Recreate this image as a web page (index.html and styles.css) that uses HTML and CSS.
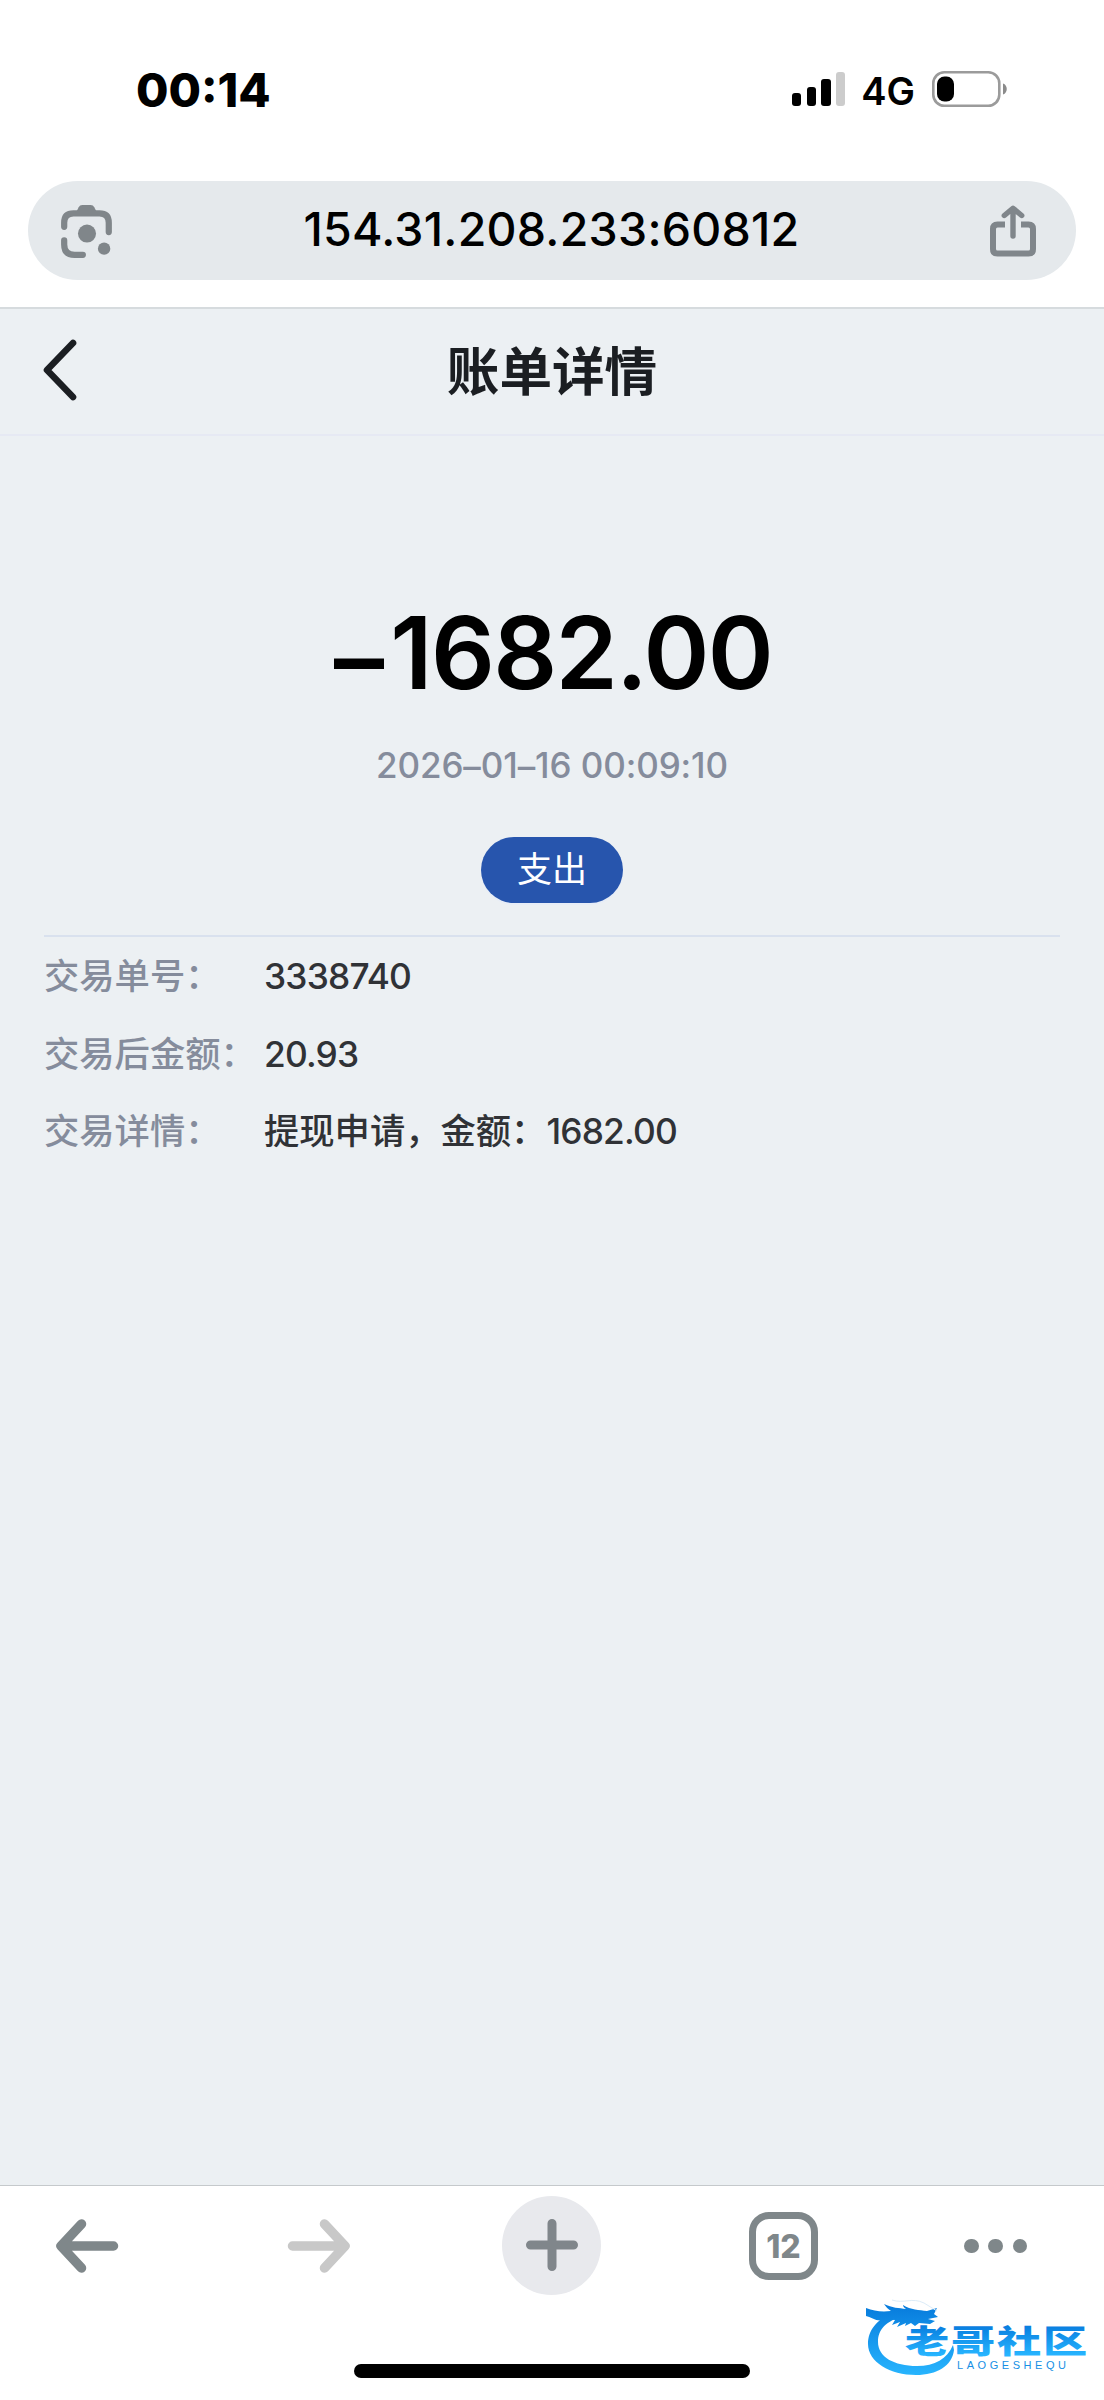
FILE: index.html
```html
<!DOCTYPE html>
<html lang="zh-CN">
<head>
  <meta charset="utf-8">
  <title>账单详情</title>
  <link rel="stylesheet" href="styles.css">
</head>
<body>
  <div class="phone">
    <div class="status-bar">
      <div class="time">00:14</div>
      <div class="status-icons">
        <div class="signal">
          <span class="bar bar-1"></span>
          <span class="bar bar-2"></span>
          <span class="bar bar-3"></span>
          <span class="bar bar-4"></span>
        </div>
        <div class="network">4G</div>
        <svg class="battery" width="76" height="36" viewBox="0 0 76 36">
          <rect x="1.3" y="1.3" width="66" height="33.4" rx="11" fill="none" stroke="#9b9b9b" stroke-width="2.6"/>
          <rect x="5" y="5.5" width="17" height="25" rx="7.5" fill="#000"/>
          <path d="M71 12.5c5 1.5 5 9.5 0 11z" fill="#8b8b8b"/>
        </svg>
      </div>
    </div>

    <div class="address-bar">
      <svg class="lens" width="54" height="56" viewBox="0 0 52 54">
        <path d="M4 23v-4q0-9 9-9h25q9 0 9 9v9M4 36v4q0 10 10 10h8" fill="none" stroke="#80868a" stroke-width="6" stroke-linecap="round"/>
        <path d="M15 10l3-6q1-2 3.5-2h8q2.5 0 3.5 2l3 6z" fill="#80868a"/>
        <circle cx="26" cy="29.5" r="8.7" fill="#80868a"/>
        <circle cx="42.5" cy="44" r="6" fill="#80868a"/>
      </svg>
      <div class="url">154.31.208.233:60812</div>
      <svg class="share" width="48" height="52" viewBox="0 0 48 52">
        <path d="M16 19.5H8.5q-4.5 0-4.5 4.5v20q0 4.5 4.5 4.5h31q4.5 0 4.5-4.5v-20q0-4.5-4.5-4.5H32" fill="none" stroke="#80868b" stroke-width="6"/>
        <path d="M24 31V4M15.3 10.5L24 3.2l8.7 7.3" fill="none" stroke="#80868b" stroke-width="5.4" stroke-linecap="round" stroke-linejoin="round"/>
      </svg>
    </div>

    <div class="page">
      <div class="header">
        <svg class="back" width="36" height="62" viewBox="0 0 36 62">
          <path d="M31 4L5 31l26 27" fill="none" stroke="#1b1e22" stroke-width="6.6" stroke-linecap="round" stroke-linejoin="round"/>
        </svg>
        <h1>账单详情</h1>
      </div>

      <div class="summary">
        <div class="amount"><span class="minus">–</span>1682.00</div>
        <div class="date">2026<span class="dash">–</span>01<span class="dash">–</span>16 00:09:10</div>
        <div class="type">支出</div>
      </div>

      <div class="details">
        <div class="row">
          <div class="label">交易单号：</div>
          <div class="value number">3338740</div>
        </div>
        <div class="row">
          <div class="label">交易后金额：</div>
          <div class="value number">20.93</div>
        </div>
        <div class="row">
          <div class="label">交易详情：</div>
          <div class="value">提现申请，金额：<span class="number">1682.00</span></div>
        </div>
      </div>
    </div>

    <div class="toolbar">
      <div class="tools">
        <svg width="64" height="54" viewBox="0 0 64 54">
          <path d="M58.5 27H7M26.5 5L6 27l20.5 22" fill="none" stroke="#7f878a" stroke-width="9.5" stroke-linecap="round" stroke-linejoin="round"/>
        </svg>
        <svg width="64" height="54" viewBox="0 0 64 54">
          <path d="M5.5 27H57M37.5 5L58 27 37.5 49" fill="none" stroke="#c8c8c8" stroke-width="9.5" stroke-linecap="round" stroke-linejoin="round"/>
        </svg>
        <div class="new-tab">
          <svg width="54" height="54" viewBox="0 0 54 54">
            <path d="M5.5 27h43M27 5.5v43" fill="none" stroke="#80868b" stroke-width="9" stroke-linecap="round"/>
          </svg>
        </div>
        <div class="tabs">12</div>
        <div class="more"><span></span><span></span><span></span></div>
      </div>
      <div class="home-indicator"></div>
    </div>

    <!-- watermark -->
    <svg class="watermark" width="224" height="86" viewBox="0 0 224 86">
      <defs>
        <linearGradient id="ring" x1="0" y1="6" x2="0" y2="78" gradientUnits="userSpaceOnUse">
          <stop offset="0" stop-color="#077bdc"/>
          <stop offset="1" stop-color="#28b6ff"/>
        </linearGradient>
        <linearGradient id="word" x1="0" y1="0" x2="0" y2="1">
          <stop offset="0.15" stop-color="#0578dc"/>
          <stop offset="0.85" stop-color="#27b5ff"/>
        </linearGradient>
      </defs>
      <path d="M28 14C10 20 2 32 2 45c0 18 22 31 48 31 21 0 36-9 38-25l-1-5c-6 14-18 21-36 21-23 0-39-9-39-24 0-13 8-21 26-26z" fill="url(#ring)"/>
      <path d="M0 9c8 3 15 4 25 3-3-2-5-4-7-7 8 4 15 4 22 5-2-1-3-3-3-4 8 5 16 5 24 6l10-3-3 6 4 3-10 2 7 2-5 3-11-1-4 3-4-3-6 3 1-3-9 4 3-5-8 3 3-5c-5-1-8-1-12 0-6 2-12-3-17-4z" fill="url(#ring)"/>
      <path d="M26 1c12 4 20-3 32 3l13 8" fill="none" stroke="#dcecf8" stroke-width="1"/>
      <text class="mark-name" transform="translate(39 54) scale(1.38 1)" textLength="132" lengthAdjust="spacing" fill="url(#word)">老哥社区</text>
      <text class="mark-latin" x="91" y="70" textLength="109" fill="#168fe5">LAOGESHEQU</text>
    </svg>
  </div>
</body>
</html>
```
FILE: styles.css
```css
* {
  box-sizing: border-box;
}

body {
  margin: 0;
  background-color: #fff;
  font-family: Inter, "Noto Sans CJK SC", sans-serif;
}

.phone {
  position: relative;
  display: flex;
  flex-direction: column;
  width: 1104px;
  height: 2400px;
  overflow: hidden;
}

.status-bar {
  display: flex;
  justify-content: space-between;
  align-items: center;
  height: 181px;
  padding: 0 96px 3px 136px;
}

.time {
  font-size: 47px;
  font-weight: 800;
}

.status-icons {
  display: flex;
  align-items: center;
}

.signal {
  display: flex;
  align-items: flex-end;
  gap: 5.5px;
  height: 34px;
}

.bar {
  width: 9.2px;
  border-radius: 3px;
  background-color: #000;
}

.bar-1 { height: 13px; }
.bar-2 { height: 19px; }
.bar-3 { height: 27px; }
.bar-4 { height: 34px; background-color: #ccc; }

.network {
  margin: 3px 17px 0 16px;
  font-size: 38px;
  font-weight: 600;
}

.address-bar {
  display: flex;
  justify-content: space-between;
  align-items: center;
  height: 99px;
  margin: 0 28px 27px;
  padding: 0 39px 0 32px;
  border-radius: 50px;
  background-color: #e5e9ec;
}

.url {
  padding-bottom: 2px;
  font-size: 46.5px;
  font-weight: 550;
  letter-spacing: 0.25px;
  line-height: 95px;
}

.page {
  flex: 1;
  border-top: 2px solid #d6dbde;
  background-color: #ecf0f3;
}

.header {
  display: grid;
  grid-template-columns: 100px 1fr 100px;
  align-items: center;
  height: 127px;
  border-bottom: 2px solid #e6e9f3;
}

.back {
  margin: 0 0 3px 42px;
}

h1 {
  margin: 0;
  color: #1b1e22;
  font-size: 52.6px;
  font-weight: 700;
  line-height: 76px;
  text-align: center;
}

.summary {
  display: flex;
  flex-direction: column;
  align-items: center;
  height: 501px;
  margin: 0 44px;
  padding-top: 157px;
  border-bottom: 2px solid #d9e1ee;
}

.amount {
  padding-left: 2px;
  font-size: 100px;
  font-weight: 600;
  letter-spacing: -1.7px;
  line-height: 120px;
}

.minus {
  margin-right: 8px;
  line-height: 1;
  vertical-align: -5px;
}

.date {
  margin-top: 30px;
  color: #858c9c;
  font-size: 35px;
  font-weight: 450;
  letter-spacing: -0.1px;
  line-height: 44px;
}

.dash {
  line-height: 1;
  vertical-align: -1px;
}

.type {
  width: 142px;
  height: 66px;
  margin-top: 50px;
  border-radius: 33px;
  background-color: #2755ad;
  box-shadow: 0 2px 0 #e7edf7;
  color: #fff;
  font-size: 35px;
  line-height: 65px;
  text-align: center;
}

.details {
  padding: 1px 44px;
}

.row {
  display: flex;
  height: 77.5px;
  font-size: 35.3px;
  font-weight: 500;
  line-height: 77px;
}

.label {
  width: 220px;
  color: #858c9c;
  white-space: nowrap;
}

.value {
  color: #303236;
}

.number {
  font-weight: 450;
  letter-spacing: -0.8px;
}

.toolbar {
  height: 215px;
  border-top: 1px solid #c5c9cc;
  background-color: #fff;
}

.tools {
  display: grid;
  grid-template-columns: 232px 215px 247px 215px auto;
  align-items: center;
  height: 120px;
  padding-left: 55px;
}

.new-tab {
  display: flex;
  justify-content: center;
  align-items: center;
  width: 99px;
  height: 99px;
  margin-bottom: 2px;
  border-radius: 50%;
  background-color: #e8e9ed;
}

.tabs {
  width: 69px;
  height: 68px;
  border: 7px solid #7f878a;
  border-radius: 20px;
  color: #7f878a;
  font-size: 32px;
  font-weight: 800;
  line-height: 56px;
  text-align: center;
}

.more {
  display: flex;
  gap: 9.5px;
}

.more span {
  width: 14.8px;
  height: 14.8px;
  border-radius: 50%;
  background-color: #7f878a;
}

.home-indicator {
  width: 396px;
  height: 14px;
  margin: 58px auto 0;
  border-radius: 7px;
  background-color: #000;
}

.watermark {
  position: absolute;
  left: 866px;
  top: 2299px;
}

.mark-name {
  font-family: "Noto Sans CJK SC", sans-serif;
  font-size: 32px;
  font-weight: 900;
}

.mark-latin {
  font-family: "Liberation Sans", sans-serif;
  font-size: 11px;
}
```
